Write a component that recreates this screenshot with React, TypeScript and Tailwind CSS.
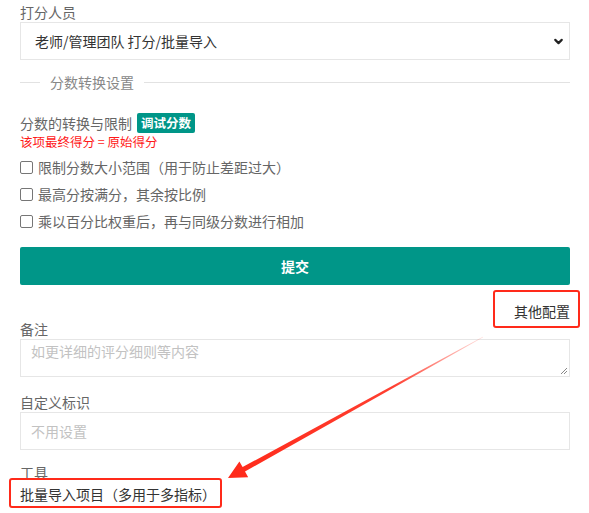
import { ChevronDown } from "lucide-react";

const font = { fontFamily: '"Microsoft YaHei", "Noto Sans CJK SC", "Liberation Sans", sans-serif' };

function Check({ label }: { label: string }) {
  return (
    <label className="flex h-[27px] items-center gap-[5px] text-[14px] text-[#666]">
      <span className="size-[13px] rounded-[2px] border border-[#767676] bg-white" />
      {label}
    </label>
  );
}

function Arrow() {
  return (
    <svg className="pointer-events-none absolute inset-0" width="589" height="513" viewBox="0 0 589 513" aria-hidden="true">
      <defs>
        <linearGradient id="fade" x1="483" y1="337" x2="228" y2="478" gradientUnits="userSpaceOnUse">
          <stop offset="0" stopColor="#ff2a1a" stopOpacity="0.15" />
          <stop offset="0.35" stopColor="#ff2a1a" stopOpacity="0.9" />
          <stop offset="1" stopColor="#ff2a1a" />
        </linearGradient>
      </defs>
      <polygon
        points="483.2,337.3 245.0,471.5 248.2,477.2 228,478 239.4,461.4 242.6,467.1 482.8,336.7"
        fill="url(#fade)"
      />
    </svg>
  );
}

export default function App() {
  return (
    <div className="relative h-[513px] w-[589px] overflow-hidden bg-white pl-5 pr-[19px]" style={font}>
      <div className="pt-[2px] text-[14px] leading-5 text-[#666]">打分人员</div>
      <div className="flex h-[38px] items-center justify-between border border-[#e6e6e6] pl-[14px] pr-[4px] text-[14px] text-[#333]">
        <span>老师/管理团队 打分/批量导入</span>
        <ChevronDown className="size-[13px] text-[#222]" strokeWidth={4} />
      </div>

      <div className="mt-[12px] flex h-5 items-center gap-[10px] text-[14px] text-[#888]">
        <span className="h-px w-5 bg-[#e2e2e2]" />
        <span>分数转换设置</span>
        <span className="h-px flex-1 bg-[#e2e2e2]" />
      </div>

      <div className="mt-[21px] flex h-5 items-center gap-[5px] text-[14px] text-[#666]">
        <span>分数的转换与限制</span>
        <span className="flex h-5 items-center rounded-[2px] bg-[#009688] px-[4px] text-[12.5px] font-bold text-white">调试分数</span>
      </div>
      <div className="h-[18px] text-[12.5px] leading-[18px] text-[#ff1a1a]">该项最终得分&nbsp;=&nbsp;原始得分</div>

      <div className="mt-[3px] flex flex-col">
        <Check label="限制分数大小范围（用于防止差距过大）" />
        <Check label="最高分按满分，其余按比例" />
        <Check label="乘以百分比权重后，再与同级分数进行相加" />
      </div>

      <div className="mt-[12px] flex h-[38px] items-center justify-center rounded-[2px] bg-[#009688] text-[14px] font-bold text-white">
        提交
      </div>

      <div className="mt-[16px] flex h-5 justify-end text-[14px] leading-5 text-[#333]">其他配置</div>

      <div className="mt-[-2px] text-[14px] leading-5 text-[#666]">备注</div>
      <div className="relative h-[38px] border border-[#e6e6e6] pl-[10px] pt-px text-[14px] text-[#c2c2c2]">
        如更详细的评分细则等内容
        <svg className="absolute bottom-[1px] right-[1px]" width="8" height="8" viewBox="0 0 8 8" aria-hidden="true">
          <path d="M7 1 1 7M7 4 4 7" stroke="#888" strokeWidth="1" />
        </svg>
      </div>

      <div className="mt-[15px] text-[14px] leading-5 text-[#666]">自定义标识</div>
      <div className="flex h-[38px] items-center border border-[#e6e6e6] pl-[10px] text-[14px] text-[#c2c2c2]">不用设置</div>

      <div className="mt-[12px] text-[14px] leading-5 text-[#666]">工具</div>
      <div className="mt-[2px] text-[14px] leading-5 text-[#333]">批量导入项目（多用于多指标）</div>

      <div className="pointer-events-none absolute left-[493px] top-[290px] h-[38px] w-[87px] rounded-[3px] border-2 border-[#ff2a1a]" />
      <div className="pointer-events-none absolute left-[9px] top-[478px] h-[30px] w-[213px] rounded-[3px] border-2 border-[#ff2a1a]" />
      <Arrow />
    </div>
  );
}
